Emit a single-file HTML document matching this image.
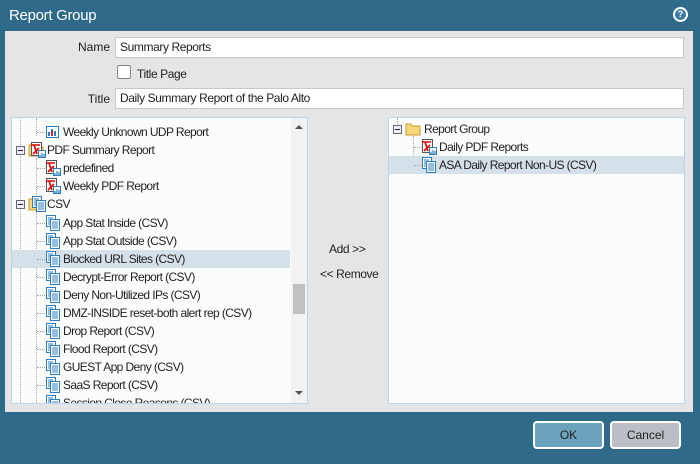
<!DOCTYPE html>
<html><head><style>
*{margin:0;padding:0;box-sizing:border-box}
body{width:700px;height:464px;background:#2f6a89;font-family:"Liberation Sans",sans-serif;font-size:12px;color:#222;position:relative;overflow:hidden}
.abs{position:absolute}
.title{left:9px;top:7px;color:#fff;font-size:15px;letter-spacing:-0.3px}
.help{left:673px;top:7px;width:15px;height:15px;border-radius:50%;background:#fff;border:2px solid #fff;}
.help div{width:11px;height:11px;border-radius:50%;background:#3d7aa6;color:#fff;font-size:9px;font-weight:bold;text-align:center;line-height:11px}
.main{left:5px;top:31px;width:688px;height:381px;background:#e5e5e5}
.inp{background:#fff;border:1px solid #c8c8c8;height:21px;line-height:19px;padding-left:4px;font-size:12px;letter-spacing:-0.4px}
.lbl{text-align:right;font-size:12px}
.box{background:#fbfcfc;border:1px solid #bcd4ec;overflow:hidden;letter-spacing:-0.6px}
.row{position:absolute;height:18px;line-height:18px;white-space:nowrap;left:0;right:0}
.sel{background:#d6e0e8}
.ic{position:absolute;top:1px;width:16px;height:16px}
.btn{height:28px;border:2px solid #fff;border-radius:4px;text-align:center;line-height:24px;font-size:12px}
.dot{position:absolute;border-left:1px dotted #aaa}
.hd{position:absolute;border-top:1px dotted #aaa;width:8px}
</style></head><body>
<div class="abs title">Report Group</div>
<div class="abs help"><div>?</div></div>
<div class="abs main"></div>
<div class="abs lbl" style="left:40px;top:40px;width:70px">Name</div>
<div class="abs inp" style="left:115px;top:37px;width:569px">Summary Reports</div>
<div class="abs" style="left:117px;top:65px;width:14px;height:14px;border:1px solid #888;background:#fff;border-radius:2px"></div>
<div class="abs" style="left:137px;top:67px;letter-spacing:-0.4px">Title Page</div>
<div class="abs lbl" style="left:40px;top:92px;width:70px">Title</div>
<div class="abs inp" style="left:115px;top:88px;width:569px">Daily Summary Report of the Palo Alto</div>

<svg width="0" height="0" style="position:absolute"><defs>
<symbol id="csv" viewBox="0 0 16 16"><rect x="1.5" y="0.5" width="9" height="11" fill="#fff" stroke="#2d7ec0"/><rect x="5.5" y="4.5" width="9" height="11" fill="#fff" stroke="#2d7ec0"/><path d="M3 3h5M3 5h2M3 7h2M3 9h2M7 7h6M7 9h6M7 11h6M7 13h6" stroke="#2d7ec0"/></symbol>
<symbol id="pdf" viewBox="0 0 16 16"><rect x="1.5" y="0.5" width="10" height="13" fill="#fff" stroke="#555"/><path d="M1 3h9M4 3l3 9M3 12l6-6" stroke="#d00" stroke-width="1.6" fill="none"/><rect x="8.5" y="8.5" width="7" height="7" fill="#fff" stroke="#2d7ec0"/><path d="M10 15v-2M12 15v-4M14 15v-3" stroke="#2d7ec0" stroke-width="1.2"/></symbol>
<symbol id="fold" viewBox="0 0 16 16"><path d="M1 3h5l1 2h8v9H1z" fill="#f6d77a" stroke="#c89b2a"/></symbol>
<symbol id="mn" viewBox="0 0 9 9"><rect x=".5" y=".5" width="8" height="8" fill="#eef" stroke="#667"/><path d="M2 4.5h5" stroke="#223"/></symbol>
</defs></svg>

<div class="abs box" style="left:11px;top:117px;width:297px;height:287px">
 <div class="dot" style="left:8px;top:0;height:287px"></div>
 <div class="dot" style="left:24px;top:40px;height:36px"></div>
 <div class="dot" style="left:24px;top:94px;height:193px"></div>
 <div class="dot" style="left:24px;top:0;height:18px"></div>
 <div class="row" style="top:5px"><div class="hd" style="left:25px;top:9px"></div><svg class="ic" style="left:33px"><rect x="1.5" y="2.5" width="12" height="11" fill="#fff" stroke="#2d7ec0"/><path d="M4 12V8M7 12V5M10 12V7" stroke="#2d7ec0" stroke-width="2"/><path d="M7 12V7" stroke="#d22" stroke-width="2"/></svg><span style="position:absolute;left:51px">Weekly Unknown UDP Report</span></div>
 <div class="row" style="top:23px"><svg class="ic" style="left:4px;top:5px;width:9px;height:9px"><use href="#mn"/></svg><svg class="ic" style="left:16px"><use href="#fold"/></svg><svg class="ic" style="left:18px"><use href="#pdf"/></svg><span style="position:absolute;left:35px">PDF Summary Report</span></div>
 <div class="row" style="top:41px"><div class="hd" style="left:25px;top:9px"></div><svg class="ic" style="left:33px"><use href="#pdf"/></svg><span style="position:absolute;left:51px">predefined</span></div>
 <div class="row" style="top:59px"><div class="hd" style="left:25px;top:9px"></div><svg class="ic" style="left:33px"><use href="#pdf"/></svg><span style="position:absolute;left:51px">Weekly PDF Report</span></div>
 <div class="row" style="top:77px"><svg class="ic" style="left:4px;top:5px;width:9px;height:9px"><use href="#mn"/></svg><svg class="ic" style="left:16px"><use href="#fold"/></svg><svg class="ic" style="left:19px"><use href="#csv"/></svg><span style="position:absolute;left:35px">CSV</span></div>
 <div class="row" style="top:96px"><div class="hd" style="left:25px;top:9px"></div><svg class="ic" style="left:33px"><use href="#csv"/></svg><span style="position:absolute;left:51px">App Stat Inside (CSV)</span></div>
 <div class="row" style="top:114px"><div class="hd" style="left:25px;top:9px"></div><svg class="ic" style="left:33px"><use href="#csv"/></svg><span style="position:absolute;left:51px">App Stat Outside (CSV)</span></div>
 <div class="row sel" style="top:132px;right:17px"><div class="hd" style="left:25px;top:9px"></div><svg class="ic" style="left:33px"><use href="#csv"/></svg><span style="position:absolute;left:51px">Blocked URL Sites (CSV)</span></div>
 <div class="row" style="top:150px"><div class="hd" style="left:25px;top:9px"></div><svg class="ic" style="left:33px"><use href="#csv"/></svg><span style="position:absolute;left:51px">Decrypt-Error Report (CSV)</span></div>
 <div class="row" style="top:168px"><div class="hd" style="left:25px;top:9px"></div><svg class="ic" style="left:33px"><use href="#csv"/></svg><span style="position:absolute;left:51px">Deny Non-Utilized IPs (CSV)</span></div>
 <div class="row" style="top:186px"><div class="hd" style="left:25px;top:9px"></div><svg class="ic" style="left:33px"><use href="#csv"/></svg><span style="position:absolute;left:51px">DMZ-INSIDE reset-both alert rep (CSV)</span></div>
 <div class="row" style="top:204px"><div class="hd" style="left:25px;top:9px"></div><svg class="ic" style="left:33px"><use href="#csv"/></svg><span style="position:absolute;left:51px">Drop Report (CSV)</span></div>
 <div class="row" style="top:222px"><div class="hd" style="left:25px;top:9px"></div><svg class="ic" style="left:33px"><use href="#csv"/></svg><span style="position:absolute;left:51px">Flood Report (CSV)</span></div>
 <div class="row" style="top:240px"><div class="hd" style="left:25px;top:9px"></div><svg class="ic" style="left:33px"><use href="#csv"/></svg><span style="position:absolute;left:51px">GUEST App Deny (CSV)</span></div>
 <div class="row" style="top:258px"><div class="hd" style="left:25px;top:9px"></div><svg class="ic" style="left:33px"><use href="#csv"/></svg><span style="position:absolute;left:51px">SaaS Report (CSV)</span></div>
 <div class="row" style="top:276px"><div class="hd" style="left:25px;top:9px"></div><svg class="ic" style="left:33px"><use href="#csv"/></svg><span style="position:absolute;left:51px">Session Close Reasons (CSV)</span></div>
 <div class="abs" style="left:279px;top:0;width:17px;height:287px;background:#f2f2f2"></div>
 <div class="abs" style="left:283px;top:7px;width:0;height:0;border:4px solid transparent;border-bottom:4px solid #555;border-top:0"></div>
 <div class="abs" style="left:283px;top:273px;width:0;height:0;border:4px solid transparent;border-top:4px solid #555;border-bottom:0"></div>
 <div class="abs" style="left:281px;top:166px;width:12px;height:30px;background:#c1c1c1"></div>
</div>

<div class="abs" style="left:329px;top:242px;letter-spacing:-0.4px">Add &gt;&gt;</div>
<div class="abs" style="left:320px;top:267px;letter-spacing:-0.4px">&lt;&lt; Remove</div>

<div class="abs box" style="left:388px;top:117px;width:297px;height:287px">
 <div class="dot" style="left:8px;top:0;height:6px"></div>
 <div class="dot" style="left:24px;top:18px;height:28px"></div>
 <div class="row" style="top:2px"><svg class="ic" style="left:4px;top:5px;width:9px;height:9px"><use href="#mn"/></svg><svg class="ic" style="left:16px"><use href="#fold"/></svg><span style="position:absolute;left:35px">Report Group</span></div>
 <div class="row" style="top:20px"><div class="hd" style="left:25px;top:9px"></div><svg class="ic" style="left:32px"><use href="#pdf"/></svg><span style="position:absolute;left:50px">Daily PDF Reports</span></div>
 <div class="row sel" style="top:38px"><div class="hd" style="left:25px;top:9px"></div><svg class="ic" style="left:32px"><use href="#csv"/></svg><span style="position:absolute;left:50px">ASA Daily Report Non-US (CSV)</span></div>
</div>

<div class="abs btn" style="left:533px;top:421px;width:71px;background:#6ba3bd">OK</div>
<div class="abs btn" style="left:610px;top:421px;width:71px;background:#bbbec5">Cancel</div>
</body></html>
